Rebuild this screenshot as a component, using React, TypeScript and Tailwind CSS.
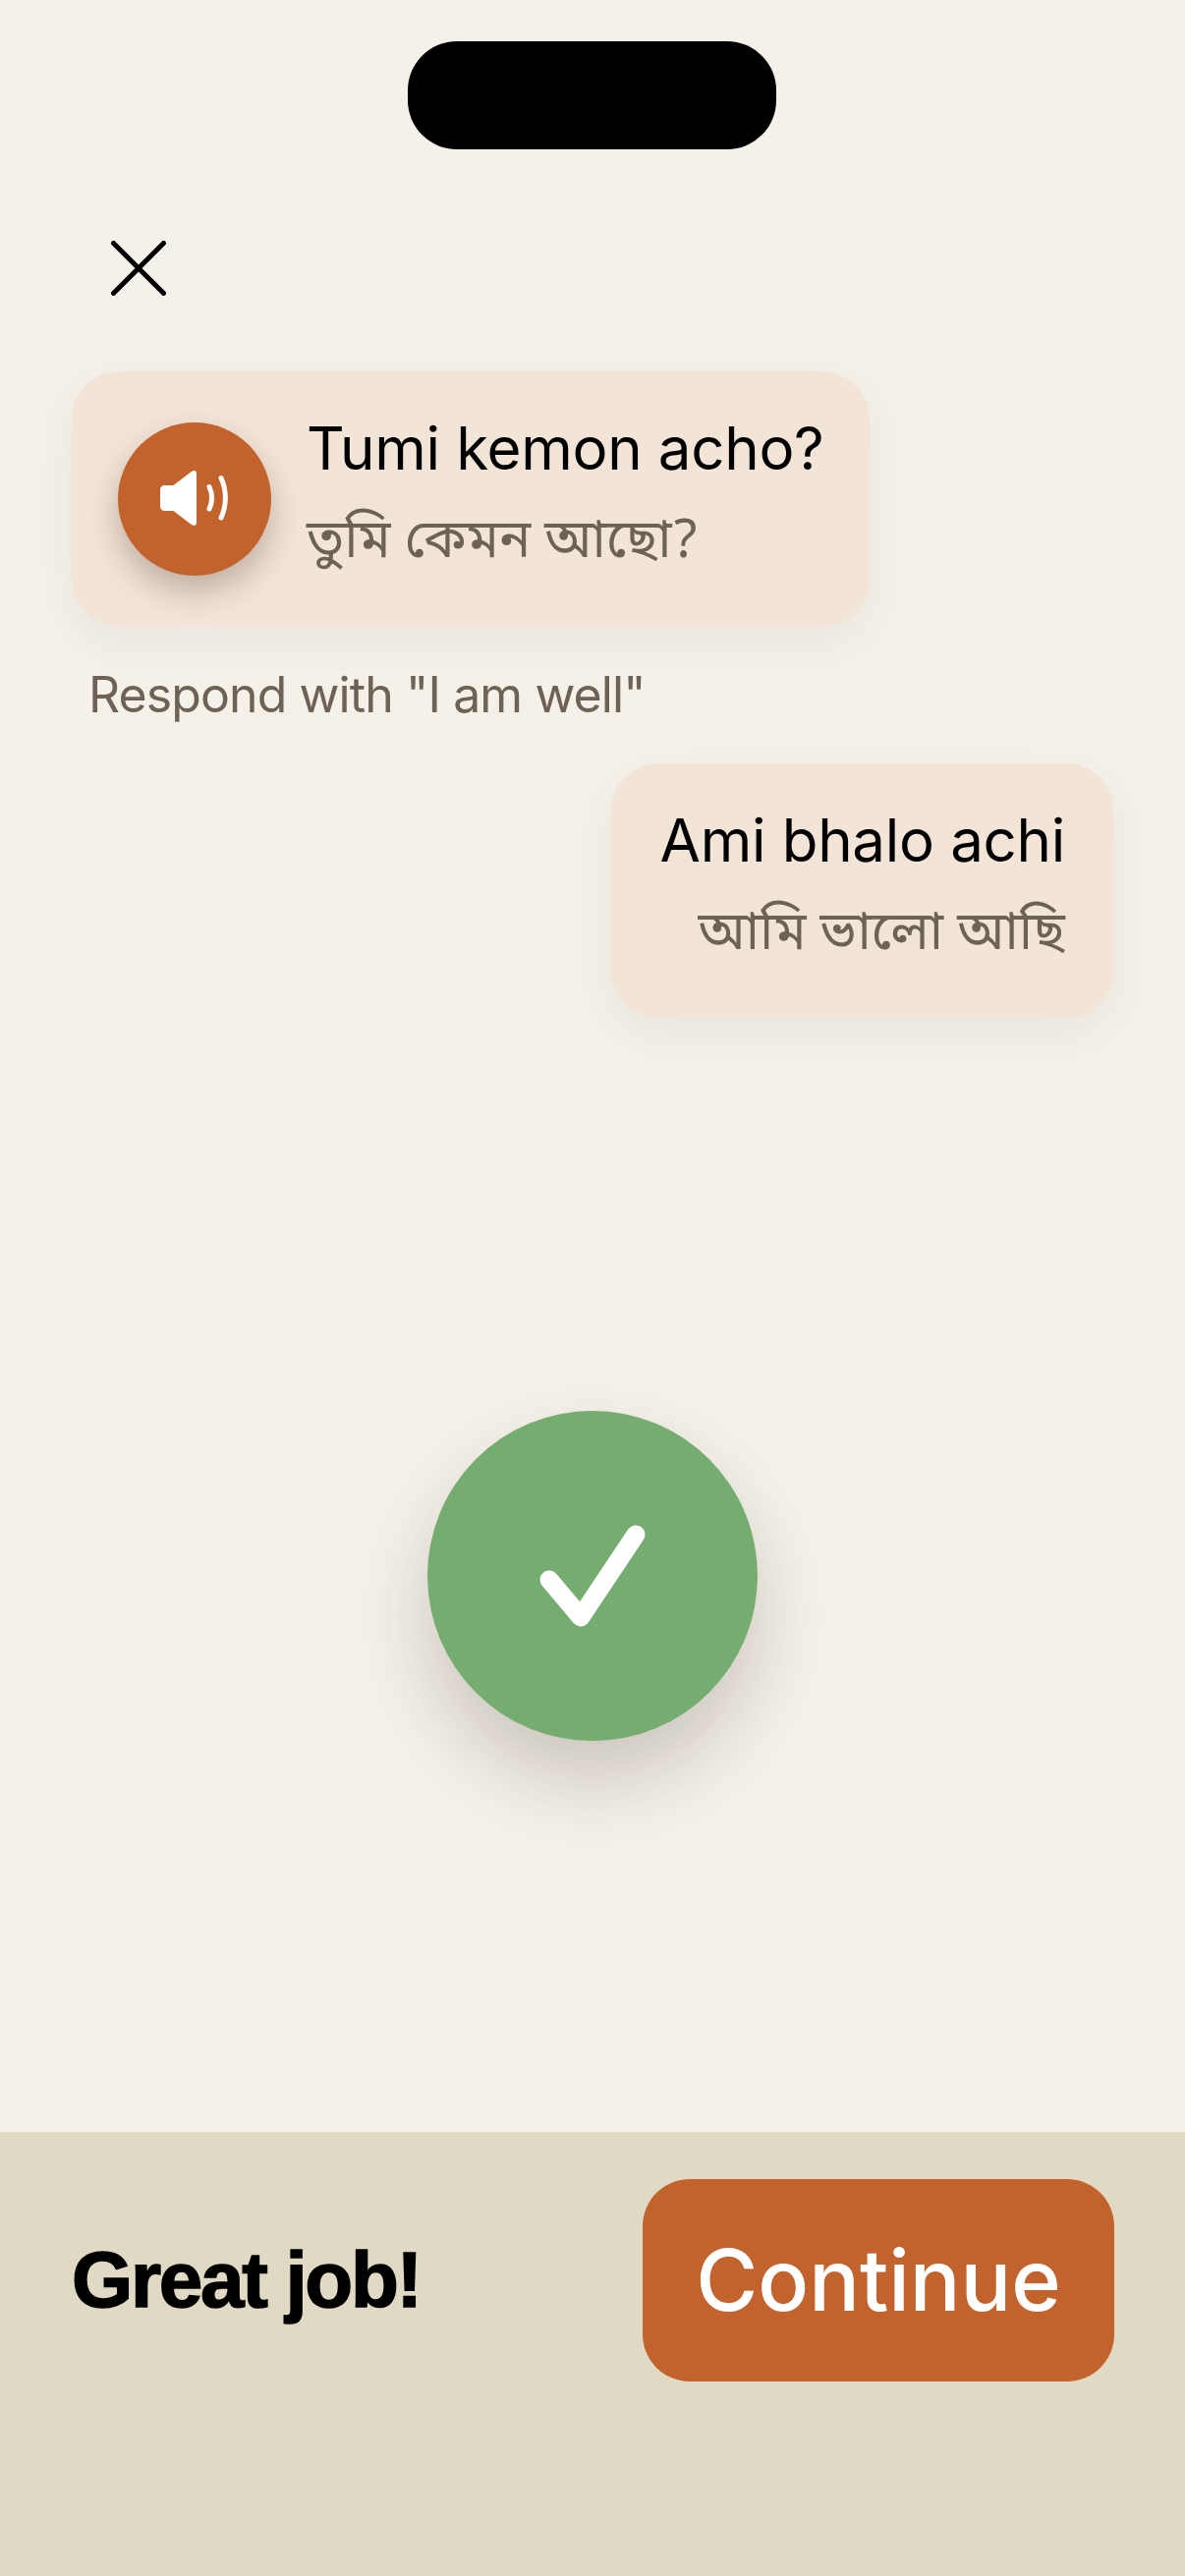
import React from "react";

const bn = '"Noto Sans Bengali", "Liberation Serif", serif';

function Speaker() {
  return (
    <svg width="70" height="56" viewBox="0 0 70 56" fill="none" className="mt-[-1px]">
      <path d="M4.500 15H13.500L31.500 1.200C34.200-.8 37-.2 37 3V53C37 56.200 34.200 56.800 31.500 54.800L13.500 41H4.500C2 41 0 39 0 36.500V19.500C0 17 2 15 4.500 15Z" fill="#fff" />
      <path d="M50 16.500C53.200 23.500 53.200 32 50 39" stroke="#fff" strokeWidth="5" strokeLinecap="round" />
      <path d="M62 7.500C67.800 20 67.800 35.500 62 48" stroke="#fff" strokeWidth="5" strokeLinecap="round" />
    </svg>
  );
}

export default function App() {
  return (
    <div className="flex h-[2622px] w-[1206px] flex-col overflow-hidden bg-[#f5f1e9] font-['Inter','Noto_Sans',sans-serif]">
      <div className="mt-[42px] ml-[-1px] h-[110px] w-[375px] self-center rounded-[50px] bg-black" />

      <main className="flex flex-1 flex-col px-[73px]">
        <button className="mt-[93px] ml-[40px] flex h-[55px] w-[56px] items-center justify-center self-start">
          <svg width="56" height="56" viewBox="0 0 56 56" fill="none">
            <path d="M2.500 2.500 L53.500 53.500 M53.500 2.500 L2.500 53.500" stroke="#000" strokeWidth="5" strokeLinecap="round" />
          </svg>
        </button>

        <section className="mt-[78px] flex h-[259px] w-[812px] items-center gap-[36px] rounded-[48px] bg-[#f2e4d7] pr-[48px] pl-[47px] shadow-[0_16px_48px_rgba(90,70,50,0.07)]">
          <div className="flex h-[156px] w-[156px] shrink-0 items-center justify-center rounded-full bg-[#c2622d] shadow-[0_16px_32px_rgba(60,40,25,0.28)]">
            <Speaker />
          </div>
          <div className="flex flex-col pb-[7px]">
            <p className="text-[60px] leading-[76px] tracking-[-0.3px] whitespace-nowrap text-black">Tumi kemon acho?</p>
            <p className="mt-[21px] text-[54px] leading-[76px] whitespace-nowrap text-[#6e6257]" style={{ fontFamily: bn }}>তুমি কেমন আছো?</p>
          </div>
        </section>

        <p className="mt-[40px] ml-[17px] text-[50px] leading-[60px] tracking-[-0.9px] text-[#6e6257]">Respond with "I am well"</p>

        <section className="mt-[40px] flex h-[259px] w-[511px] flex-col items-end justify-center self-end rounded-[48px] bg-[#f2e4d7] px-[49px] pb-[6px] shadow-[0_16px_48px_rgba(90,70,50,0.07)]">
          <p className="text-[60px] leading-[76px] tracking-[-0.3px] whitespace-nowrap text-black">Ami bhalo achi</p>
          <p className="mt-[21px] text-[54px] leading-[76px] whitespace-nowrap text-[#6e6257]" style={{ fontFamily: bn }}>আমি ভালো আছি</p>
        </section>

        <div className="mt-[400px] flex h-[336px] w-[336px] items-center justify-center self-center rounded-full bg-[#75ad71] shadow-[0_40px_80px_rgba(60,45,30,0.22)]">
          <svg width="118" height="114" viewBox="0 0 118 114" fill="none">
            <path d="M15 61 L47 99 L103 15" stroke="#fff" strokeWidth="19" strokeLinecap="round" strokeLinejoin="round" />
          </svg>
        </div>
      </main>

      <footer className="flex h-[452px] items-start justify-between bg-[#e0dac5] pt-[48px] pr-[72px] pl-[73px]">
        <p className="mt-[60px] font-['Liberation_Sans',sans-serif] text-[80px] leading-[86px] font-bold tracking-[-2.300px] text-black [-webkit-text-stroke:1.5px_black]">Great job!</p>
        <button className="flex h-[206px] w-[480px] items-center justify-center rounded-[48px] bg-[#c2622d] text-[86px] font-medium text-white">Continue</button>
      </footer>
    </div>
  );
}
